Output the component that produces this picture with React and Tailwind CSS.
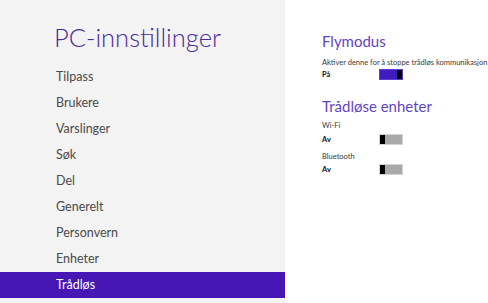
import React from 'react';

const menu = ['Tilpass', 'Brukere', 'Varslinger', 'Søk', 'Del', 'Generelt', 'Personvern', 'Enheter', 'Trådløs'];

function Toggle({ on }) {
    return (
        <div
            className={`flex h-[11px] w-[24px] border ${
                on ? 'justify-end border-[#5a3fd0] bg-[#3f1cc0]' : 'justify-start border-[#d4d4d4] bg-[#a9a9a9]'
            }`}
        >
            <div className="w-[5px] bg-black" />
        </div>
    );
}

function Setting({ label, value, on, top, gap }) {
    return (
        <div className={top}>
            <div className="whitespace-nowrap text-[7.5px] leading-[10px] text-[#3a3a3a]">{label}</div>
            <div className={`flex h-[11px] items-center ${gap}`}>
                <div className="w-[57px] text-[7.5px] font-bold leading-[11px] text-[#111]">{value}</div>
                <Toggle on={on} />
            </div>
        </div>
    );
}

export default function App() {
    return (
        <div className="flex h-[303px] w-[488px] overflow-hidden bg-white" style={{ fontFamily: 'Lato, "Open Sans", sans-serif' }}>
            <div className="h-full w-[285px] shrink-0 bg-[#f3f3f3] pt-[22px]">
                <h1 className="pl-[54px] text-[25.5px] font-light leading-[30px] text-[#4a2a9c]">PC-innstillinger</h1>
                <ul className="mt-[12px]">
                    {menu.map((item) => (
                        <li
                            key={item}
                            className={`h-[26px] pl-[56px] text-[12.5px] leading-[25px] ${
                                item === 'Trådløs' ? 'bg-[#4617b4] text-white' : 'text-[#4a4a4a]'
                            }`}
                        >
                            {item}
                        </li>
                    ))}
                </ul>
            </div>

            <div className="flex-1 pl-[37px] pt-[32px]">
                <h2 className="text-[15px] leading-[18px] text-[#6244c4]">Flymodus</h2>
                <Setting
                    label="Aktiver denne for å stoppe trådløs kommunikasjon"
                    value="På"
                    on
                    top="mt-[8px]"
                    gap="mt-[1px]"
                />

                <h2 className="mt-[17px] text-[15px] leading-[18px] text-[#6244c4]">Trådløse enheter</h2>
                <Setting label="Wi-Fi" value="Av" top="mt-[6px]" gap="mt-[3px]" />
                <Setting label="Bluetooth" value="Av" top="mt-[7px]" gap="mt-[2px]" />
            </div>
        </div>
    );
}
